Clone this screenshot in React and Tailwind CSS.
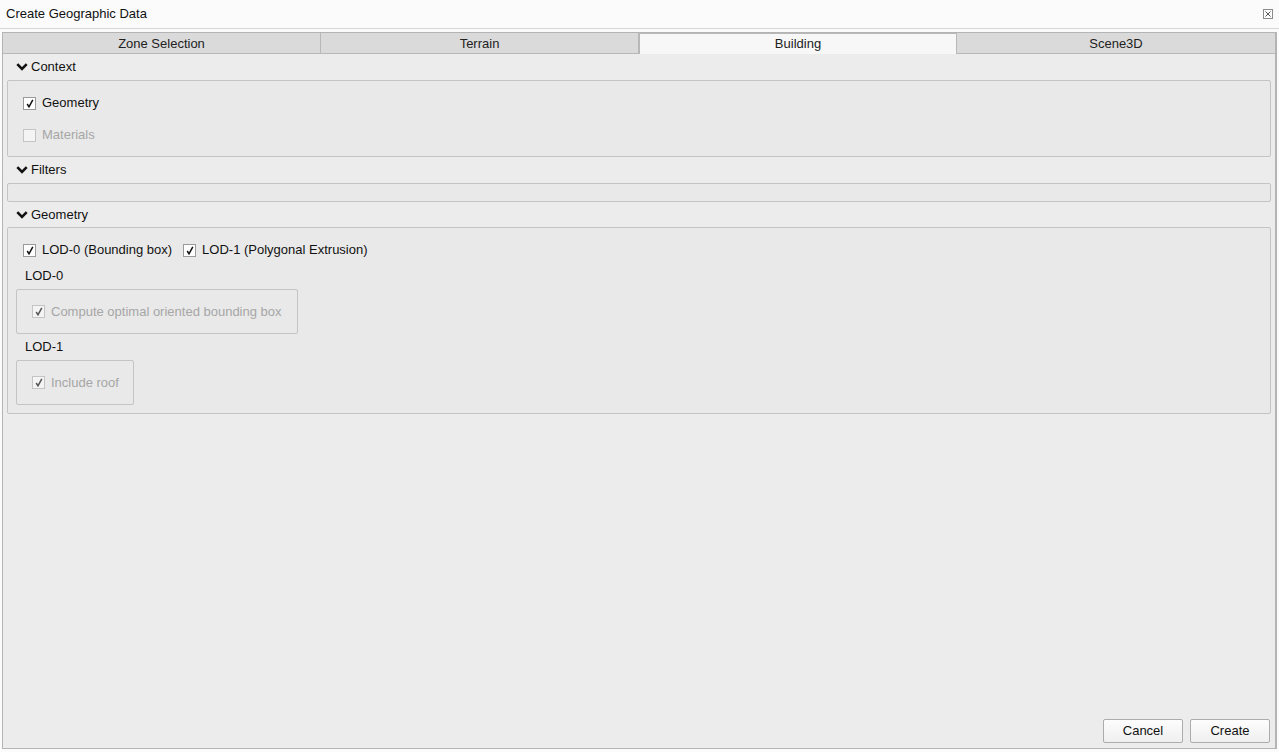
import React from 'react';

const tabs = ['Zone Selection', 'Terrain', 'Building', 'Scene3D'];

function Check({ disabled }) {
  return (
    <svg width="8" height="9" viewBox="0 0 8 9" className="block">
      <path
        d="M1.2 5 L3 7.8 L6.8 0.8"
        fill="none"
        stroke={disabled ? '#555' : '#111'}
        strokeWidth="1.5"
      />
    </svg>
  );
}

function CheckBox({ checked, disabled }) {
  return (
    <span
      className={
        'w-[13px] h-[13px] flex items-center justify-center border shrink-0 ' +
        (disabled ? 'bg-[#f4f4f4] border-[#c4c4c4]' : 'bg-white border-[#9a9a9a]')
      }
    >
      {checked && <Check disabled={disabled} />}
    </span>
  );
}

function CheckRow({ label, checked, disabled }) {
  return (
    <div className="flex items-center gap-[6px] h-[32px]">
      <CheckBox checked={checked} disabled={disabled} />
      <span className={disabled ? 'text-[#a6a6a6]' : 'text-[#111]'}>{label}</span>
    </div>
  );
}

function SectionHeader({ title, tall }) {
  return (
    <div className={(tall ? 'h-[26px]' : 'h-[25px]') + ' flex items-center pl-[9px] gap-[3px] text-[#111]'}>
      <svg width="12" height="8" viewBox="0 0 12 8">
        <path d="M1.3 1.2 L6 5.9 L10.7 1.2" fill="none" stroke="#111" strokeWidth="2.6" />
      </svg>
      <span>{title}</span>
    </div>
  );
}

export default function App() {
  return (
    <div
      className="w-full h-[752px] bg-[#fbfbfb] flex flex-col text-[13px]"
      style={{ fontFamily: '"Liberation Sans", Arial, sans-serif' }}
    >
      {/* title bar */}
      <div className="h-[29px] flex items-center justify-between pl-[6px] pr-[6px] border-b border-[#d6d6d6]">
        <span className="text-[#111]">Create Geographic Data</span>
        <span className="w-[10px] h-[10px] border border-[#8a8a8a] flex items-center justify-center">
          <svg width="6" height="6" viewBox="0 0 6 6">
            <path d="M0.5 0.5 L5.5 5.5 M5.5 0.5 L0.5 5.5" stroke="#555" strokeWidth="1" />
          </svg>
        </span>
      </div>

      {/* main frame */}
      <div className="flex-1 mt-[3px] mx-[2px] mb-[3px] border border-[#b4b4b4] border-r-2 bg-[#ececec] flex flex-col">
        <div className="grid grid-cols-4 h-[21px] border-b border-[#b8b8b8] bg-[#dadada]">
          {tabs.map((t) => (
            <div
              key={t}
              className={
                'flex items-center justify-center border-r border-[#b8b8b8] last:border-r-0 ' +
                (t === 'Building' ? 'bg-[#f7f7f7] border-l border-t border-[#b8b8b8] text-[#222]' : 'text-[#222]')
              }
            >
              {t}
            </div>
          ))}
        </div>

        <div className="px-[4px] flex flex-col">
          <SectionHeader title="Context" tall />
          <div className="border border-[#c4c4c4] rounded-[2px] bg-[#e9e9e9] px-[15px] pt-[6px] pb-[5px]">
            <CheckRow label="Geometry" checked />
            <CheckRow label="Materials" disabled />
          </div>

          <SectionHeader title="Filters" tall />
          <div className="border border-[#c4c4c4] rounded-[2px] bg-[#e9e9e9] h-[19px]" />

          <SectionHeader title="Geometry" />
          <div className="border border-[#c4c4c4] rounded-[2px] bg-[#e9e9e9] px-[8px] pt-[6px] pb-[8px] flex flex-col items-start">
            <div className="flex items-center gap-[11px] ml-[7px]">
              <CheckRow label="LOD-0 (Bounding box)" checked />
              <CheckRow label="LOD-1 (Polygonal Extrusion)" checked />
            </div>
            <div className="h-[20px] flex items-center ml-[9px] text-[#111]">LOD-0</div>
            <div className="mt-[3px] border border-[#c4c4c4] rounded-[2px] px-[15px] h-[45px] flex items-center">
              <CheckRow label="Compute optimal oriented bounding box" checked disabled />
            </div>
            <div className="h-[24px] mt-[1px] flex items-center ml-[9px] text-[#111]">LOD-1</div>
            <div className="mt-[1px] border border-[#c4c4c4] rounded-[2px] pl-[15px] pr-[14px] h-[45px] flex items-center">
              <CheckRow label="Include roof" checked disabled />
            </div>
          </div>
        </div>

        <div className="flex-1" />

        <div className="flex justify-end gap-[7px] pr-[5px] pb-[5px]">
          {['Cancel', 'Create'].map((b) => (
            <button
              key={b}
              className="w-[80px] h-[24px] border border-[#acacac] rounded-[2px] bg-gradient-to-b from-[#fdfdfd] to-[#efefef] text-[#111] text-[13px]"
            >
              {b}
            </button>
          ))}
        </div>
      </div>
    </div>
  );
}
